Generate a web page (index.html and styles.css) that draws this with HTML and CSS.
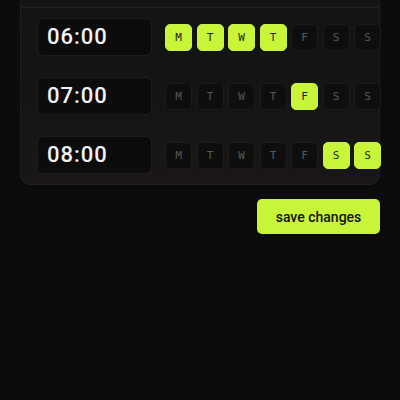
FILE: index.html
```html
<!DOCTYPE html>
<html>
<head>
<meta charset="utf-8">
<link rel="stylesheet" href="styles.css">
</head>
<body>
<div class="page">
  <div class="card">
    <div class="card-head"></div>
    <div class="rows">
      <div class="row">
        <div class="time">06:00</div>
        <div class="days">
          <span class="day on">M</span><span class="day on">T</span><span class="day on">W</span><span class="day on">T</span><span class="day">F</span><span class="day">S</span><span class="day">S</span>
        </div>
      </div>
      <div class="row">
        <div class="time">07:00</div>
        <div class="days">
          <span class="day">M</span><span class="day">T</span><span class="day">W</span><span class="day">T</span><span class="day on">F</span><span class="day">S</span><span class="day">S</span>
        </div>
      </div>
      <div class="row">
        <div class="time">08:00</div>
        <div class="days">
          <span class="day">M</span><span class="day">T</span><span class="day">W</span><span class="day">T</span><span class="day">F</span><span class="day on">S</span><span class="day on">S</span>
        </div>
      </div>
    </div>
  </div>
  <div class="actions">
    <button class="save">save changes</button>
  </div>
</div>
</body>
</html>
```
FILE: styles.css
```css
html, body {
  margin: 0;
  padding: 0;
  background: #0c0b0b;
  height: 100%;
  overflow: hidden;
}
.page {
  padding: 0 20px;
  font-family: Roboto, "Liberation Sans", sans-serif;
}
.card {
  margin-top: -40px;
  border: 1px solid #201f1f;
  border-radius: 10px;
  background: linear-gradient(180deg, #141313 0%, #151414 60%, #1a1616 100%);
}
.card-head {
  height: 46px;
  border-bottom: 1px solid #222121;
}
.rows {
  display: flex;
  flex-direction: column;
  gap: 21px;
  padding: 10px 0 10px 16px;
}
.row {
  display: flex;
  align-items: center;
  gap: 13px;
}
.time {
  flex: none;
  box-sizing: border-box;
  width: 115px;
  height: 38px;
  background: #0d0c0c;
  border: 1px solid #1f1e1e;
  border-radius: 6px;
  color: #f2f2f2;
  font-size: 22px;
  font-weight: 500;
  letter-spacing: 1px;
  line-height: 36px;
  padding-left: 9px;
}
.days {
  flex: none;
  display: flex;
  gap: 4.5px;
}
.day {
  box-sizing: border-box;
  width: 27px;
  height: 27px;
  border-radius: 5px;
  background: #0f0e0e;
  border: 1px solid #1c1b1b;
  color: #585858;
  font-family: "DejaVu Sans Mono", monospace;
  font-size: 11px;
  display: flex;
  align-items: center;
  justify-content: center;
}
.day.on {
  background: #c8f43a;
  border-color: #c8f43a;
  color: #1b1d10;
}
.actions {
  display: flex;
  justify-content: flex-end;
  margin-top: 14px;
}
.save {
  width: 123px;
  height: 35px;
  border: none;
  border-radius: 5px;
  background: #c8f43a;
  color: #121212;
  font-family: Roboto, "Liberation Sans", sans-serif;
  font-size: 14px;
  font-weight: 500;
  padding: 0;
}
```
